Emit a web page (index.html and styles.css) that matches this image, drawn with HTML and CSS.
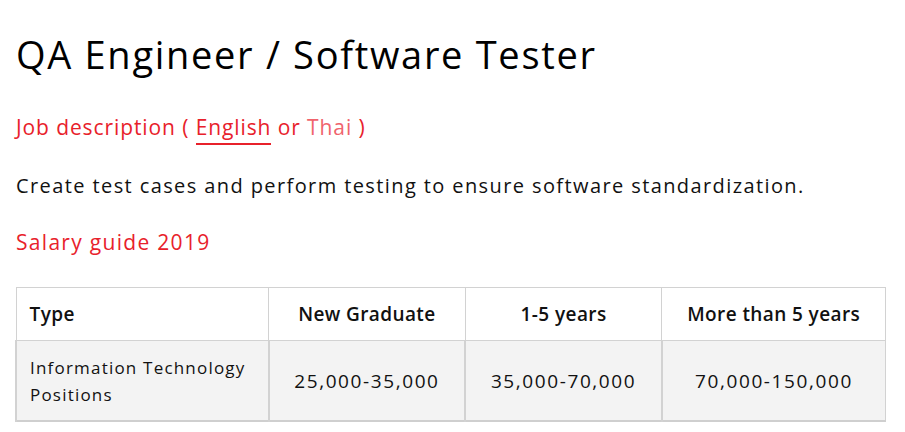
FILE: index.html
```html
<!DOCTYPE html>
<html lang="en">
<head>
<meta charset="UTF-8" />
<meta name="viewport" content="width=device-width, initial-scale=1" />
<title>QA Engineer / Software Tester</title>
<link rel="stylesheet" href="styles.css">
</head>
<body>
<div class="job">
    <h1>QA Engineer / Software Tester</h1>

    <p class="job-lang">
        Job description (
        <a href="#" class="lang active">English</a>
        or
        <a href="#" class="lang">Thai</a>
        )
    </p>

    <p class="job-desc">Create test cases and perform testing to ensure software standardization.</p>

    <h2>Salary guide 2019</h2>

    <table class="salary">
        <colgroup>
            <col class="c-type">
            <col class="c-num">
            <col class="c-num">
            <col class="c-last">
        </colgroup>
        <thead>
        <tr>
            <th>Type</th>
            <th>New Graduate</th>
            <th>1-5 years</th>
            <th>More than 5 years</th>
        </tr>
        </thead>
        <tbody>
        <tr>
            <td>Information Technology Positions</td>
            <td>25,000-35,000</td>
            <td>35,000-70,000</td>
            <td>70,000-150,000</td>
        </tr>
        </tbody>
    </table>
</div>
</body>
</html>
```

FILE: styles.css
```css
body {
    margin: 0;
    background: #fff;
    color: #111;
    font-family: "Open Sans", Lato, sans-serif;
}
.job {
    padding: 28px 19px 0 15px;
}
h1 {
    margin: 0 0 0 1px;
    font-size: 38px;
    font-weight: 500;
    line-height: 52px;
    letter-spacing: 1.7px;
    color: #000;
}
.job-lang {
    margin: 32px 0 0 1px;
    font-size: 21px;
    line-height: 30px;
    letter-spacing: 0.9px;
    color: #e8212b;
}
.lang {
    color: #f0636c;
    text-decoration: none;
}
.lang.active {
    color: #e8212b;
    padding-bottom: 2px;
    border-bottom: 2px solid #e8212b;
}
.job-desc {
    margin: 29px 0 0 1px;
    font-size: 20px;
    line-height: 30px;
    letter-spacing: 1.4px;
}
h2 {
    margin: 26px 0 0 1px;
    font-size: 21px;
    font-weight: 400;
    line-height: 30px;
    letter-spacing: 1.3px;
    color: #e8212b;
}

/* tabla de salarios */
.salary {
    margin-top: 30px;
    width: 871px;
    border-collapse: collapse;
    border: 1px solid #d2d2d2;
    border-bottom: 2px solid #cfcfcf;
}
.c-type { width: 253px; }
.c-num { width: 197px; }
.c-last { width: 224px; }
.salary th,
.salary td {
    border-left: 1px solid #d2d2d2;
    text-align: center;
    padding: 0 13px;
}
.salary th {
    height: 52px;
    font-size: 19px;
    font-weight: 600;
    letter-spacing: 0.4px;
    border-bottom: 1px solid #d2d2d2;
}
.salary td {
    height: 79px;
    font-size: 19px;
    letter-spacing: 1.6px;
    background: #f3f3f3;
    border-left-width: 2px;
}
.salary th:first-child,
.salary td:first-child {
    text-align: left;
}
.salary td:first-child {
    font-size: 17px;
    line-height: 27px;
    letter-spacing: 1.2px;
}
```
